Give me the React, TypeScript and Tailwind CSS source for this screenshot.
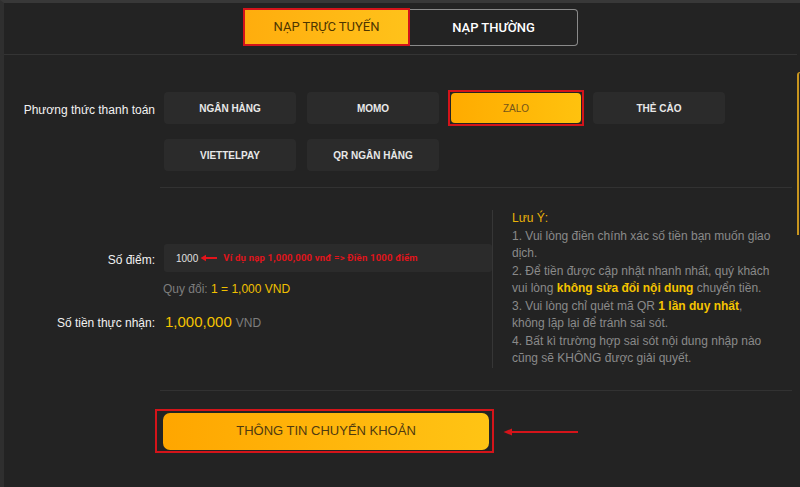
export default function App() {
  const methods = ['NGÂN HÀNG', 'MOMO', 'ZALO', 'THẺ CÀO', 'VIETTELPAY', 'QR NGÂN HÀNG'];
  const active = 'ZALO';

  return (
    <div className="flex h-[487px] w-[800px] overflow-hidden border-l-4 border-t-[3px] border-l-[#2f2f2f] border-t-[#383838] bg-[#232323] font-['Liberation_Sans',Arial,sans-serif]">
      <div className="min-w-0 flex-1">
        {/* Tabs */}
        <div className="flex h-[52px] border-b border-[#343434] pl-[239px] pt-[5px]">
          <button className="flex h-[38px] w-[167px] items-center justify-center border-2 border-[#d4141a] bg-gradient-to-r from-[#ffad0d] to-[#ffc21a] font-['Roboto',sans-serif] text-[13px] text-[#4d3500]">
            NẠP TRỰC TUYẾN
          </button>
          <button className="mt-px flex h-[37px] w-[168px] items-center justify-center rounded-r-[4px] border border-l-0 border-[#8a8a8a] font-['Roboto',sans-serif] text-[13px] font-medium text-white">
            NẠP THƯỜNG
          </button>
        </div>

        {/* Payment methods */}
        <div className="flex pt-[37px] pb-4">
          <div className="w-[151px] pt-[9px] text-right text-[12px] text-[#f2f2f2]">Phương thức thanh toán</div>
          <div className="ml-[9px] grid grid-cols-[132px_132px_132px_132px] gap-x-[11px] gap-y-[15px]">
            {methods.map((m) =>
              m === active ? (
                <div key={m} className="-m-[2px] border-2 border-[#d4141a] p-px">
                  <button className="flex h-[30px] w-full items-center justify-center rounded-[4px] bg-gradient-to-r from-[#ffab00] to-[#ffc20e] text-[10px] text-[#74551a]">
                    {m}
                  </button>
                </div>
              ) : (
                <button
                  key={m}
                  className="flex h-[32px] items-center justify-center rounded-[4px] bg-[#2b2b2b] text-[10px] font-bold text-[#e8e8e8]"
                >
                  {m}
                </button>
              )
            )}
          </div>
        </div>

        <div className="ml-[156px] mr-[5px] border-t border-[#323232]" />

        {/* Amount + notes */}
        <div className="flex pt-[22px] pb-[22px]">
          <div className="w-[488px]">
            <div className="mt-[34px] flex items-center">
              <div className="w-[151px] pt-[3px] text-right text-[12px] text-[#f2f2f2]">Số điểm:</div>
              <div className="ml-[9px] flex h-[28px] flex-1 items-center rounded-[3px] bg-[#2b2b2b] pl-3">
                <span className="text-[10px] text-[#e0e0e0]">1000</span>
                <svg width="18" height="8" viewBox="0 0 18 8" className="ml-[2px]">
                  <path d="M17 4H5" stroke="#e3141b" strokeWidth="2" />
                  <path d="M0.5 4L6 0.8V7.2Z" fill="#e3141b" />
                </svg>
                <span className="ml-[5px] font-['Roboto',sans-serif] text-[9.5px] font-bold tracking-[0.2px] text-[#e0141b]">
                  Ví dụ nạp 1,000,000 vnđ =&gt; Điền 1000 điểm
                </span>
              </div>
            </div>
            <div className="ml-[159px] mt-[9px] text-[12px] leading-4 text-[#7d7d7d]">
              Quy đổi: <span className="text-[#f0c000]">1 = 1,000 VND</span>
            </div>
            <div className="mt-[14px] flex items-center">
              <div className="w-[151px] pt-[2px] text-right text-[12px] text-[#f2f2f2]">Số tiền thực nhận:</div>
              <div className="ml-[10px] flex items-baseline gap-1">
                <span className="text-[15px] text-[#f5c400]">1,000,000</span>
                <span className="text-[12px] text-[#7d7d7d]">VND</span>
              </div>
            </div>
          </div>
          <div className="border-l border-[#363636] pl-[19px] text-[12px] leading-[17.5px] text-[#8a8a8a]">
            <div className="text-[#eab308]">Lưu Ý:</div>
            <div>1. Vui lòng điền chính xác số tiền bạn muốn giao</div>
            <div>dịch.</div>
            <div>2. Để tiền được cập nhật nhanh nhất, quý khách</div>
            <div>
              vui lòng <span className="font-bold text-[#f5c400]">không sửa đổi nội dung</span> chuyển tiền.
            </div>
            <div>
              3. Vui lòng chỉ quét mã QR <span className="font-bold text-[#f5c400]">1 lần duy nhất</span>,
            </div>
            <div>không lặp lại để tránh sai sót.</div>
            <div>4. Bất kì trường hợp sai sót nội dung nhập nào</div>
            <div>cũng sẽ KHÔNG được giải quyết.</div>
          </div>
        </div>

        <div className="ml-[156px] mr-[5px] border-t border-[#323232]" />

        {/* Submit */}
        <div className="ml-[151px] mt-[18px] flex items-center">
          <div className="border-2 border-[#d4141a] pb-px pl-[6px] pr-[3px] pt-[2px]">
            <button className="flex h-[37px] w-[326px] items-center justify-center rounded-[7px] bg-gradient-to-r from-[#ffa600] to-[#ffc414] text-[13px] text-[#4f3a10]">
              THÔNG TIN CHUYỂN KHOẢN
            </button>
          </div>
          <svg width="76" height="8" viewBox="0 0 76 8" className="ml-[9px] mt-[2px]">
            <path d="M75 4H8" stroke="#d4141a" strokeWidth="2" />
            <path d="M0.5 4L9 0.5V7.5Z" fill="#d4141a" />
          </svg>
        </div>
      </div>

      {/* right edge panel */}
      <div className="w-[3px]">
        <div className="mt-[69px] h-[163px] rounded-tl-[3px] border-l-2 border-t border-[#c8951e]" />
      </div>
    </div>
  );
}
